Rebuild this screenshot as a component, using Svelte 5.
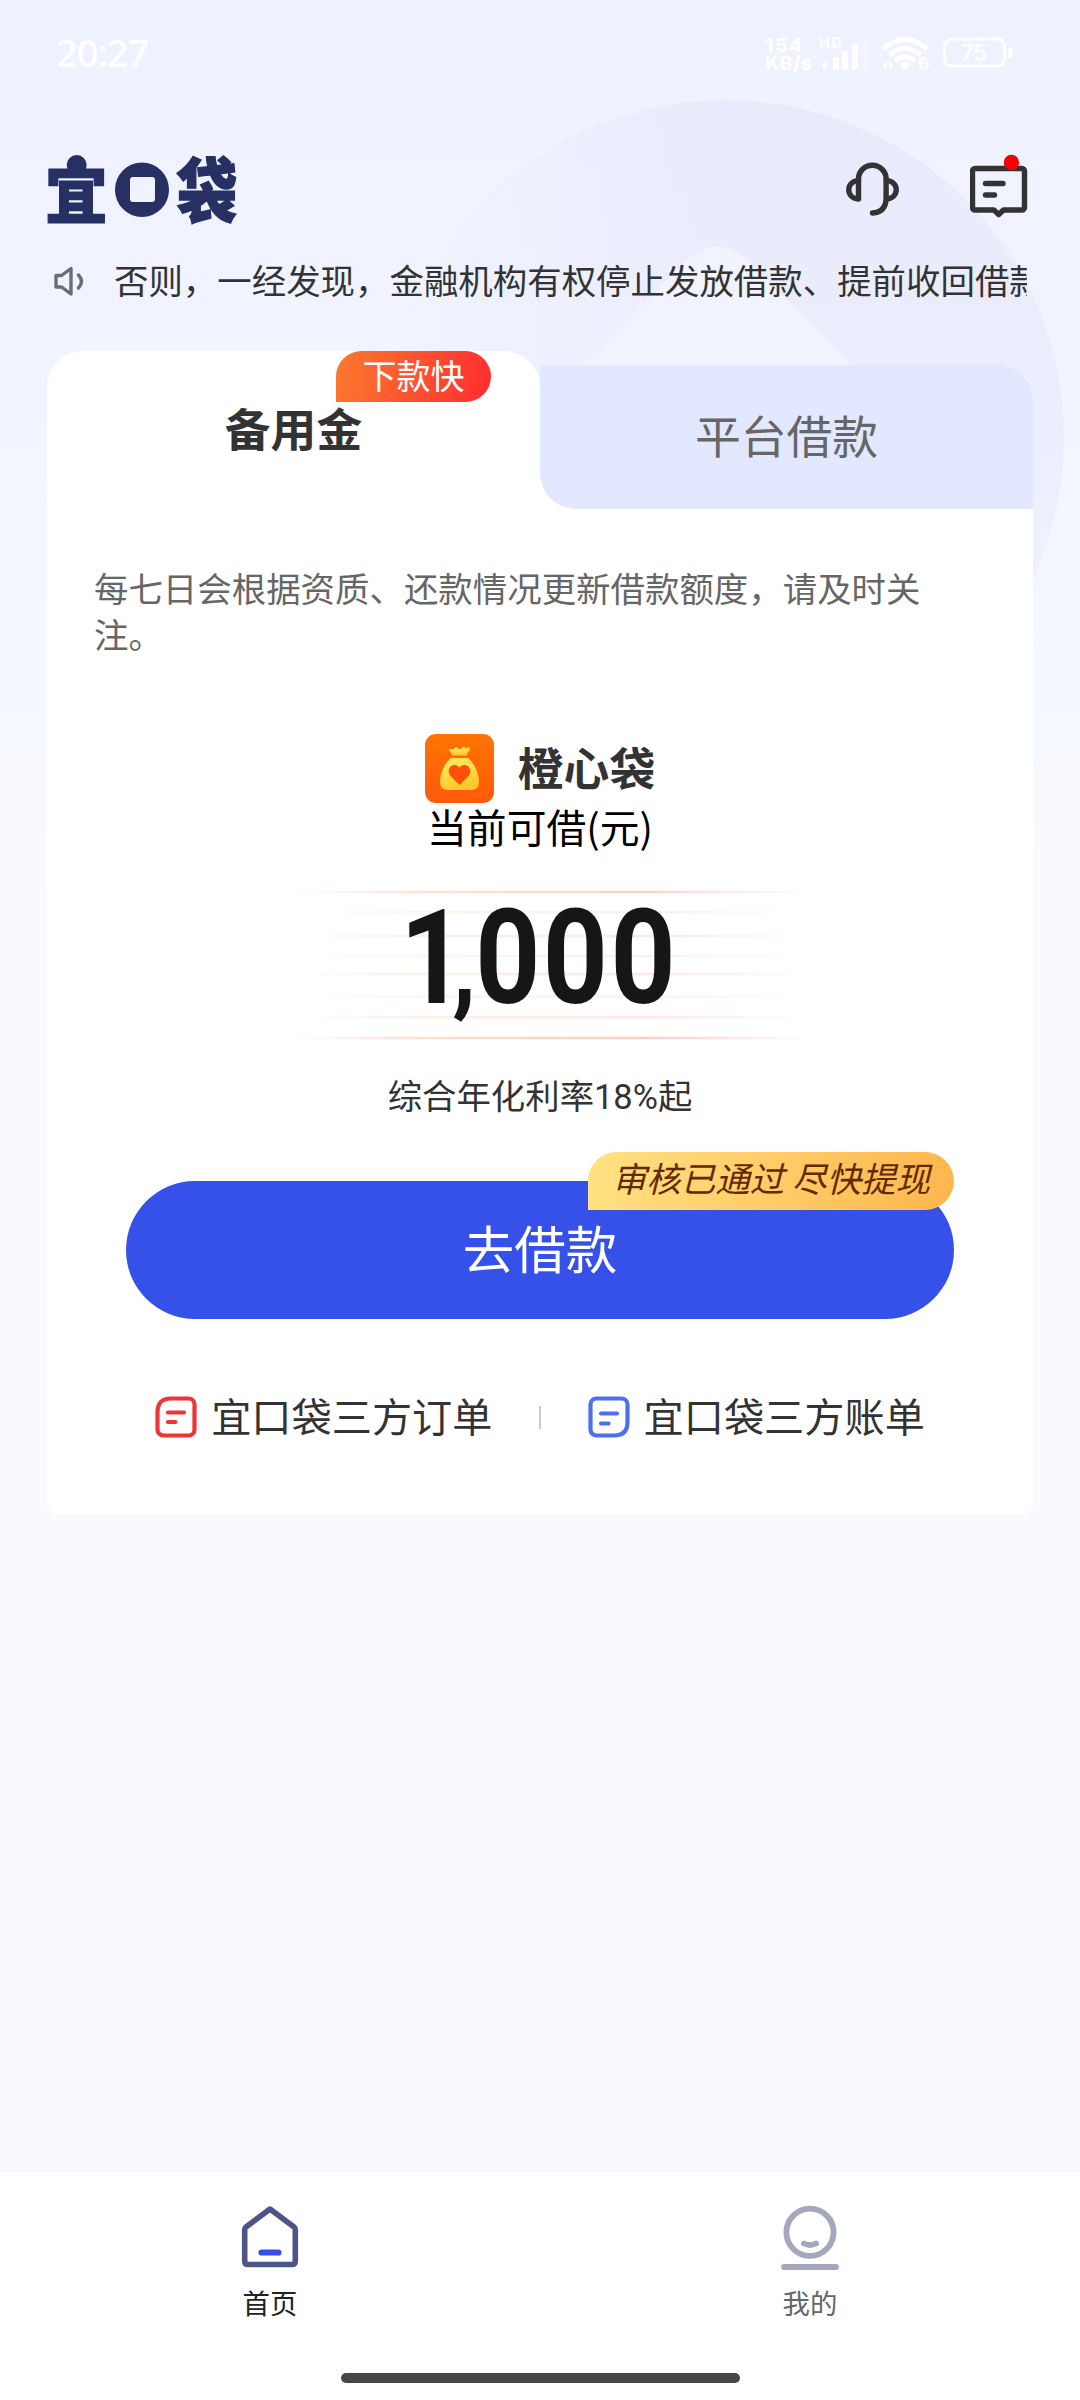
<script>
	let activeTab = 0;

	const tabs = [
		{ label: '备用金', badge: '下款快' },
		{ label: '平台借款' }
	];

	// y offset and strength of the stripes behind the amount
	const stripes = [
		{ y: 8, opacity: 0.28 },
		{ y: 28.3, opacity: 0.1 },
		{ y: 52, opacity: 0.15 },
		{ y: 72.3, opacity: 0.1 },
		{ y: 90, opacity: 0.15 },
		{ y: 112.7, opacity: 0.1 },
		{ y: 133.3, opacity: 0.15 },
		{ y: 154, opacity: 0.32 }
	];
</script>

<div class="page">
	<svg class="backdrop" width="1080" height="900" viewBox="0 0 1080 900" aria-hidden="true">
		<defs>
			<linearGradient id="disc" x1="0" y1="0" x2="0" y2="1">
				<stop offset="0" stop-color="#e9ebfc" />
				<stop offset="0.5" stop-color="#ebeefd" />
				<stop offset="1" stop-color="#f5f7ff" />
			</linearGradient>
			<linearGradient id="discFade" x1="0" y1="0" x2="1" y2="0">
				<stop offset="0" stop-color="#f1f3ff" />
				<stop offset="0.5" stop-color="#f1f3ff" stop-opacity="0" />
			</linearGradient>
		</defs>
		<circle cx="726" cy="438" r="338" fill="url(#disc)" />
		<circle cx="726" cy="438" r="338" fill="url(#discFade)" />
		<rect x="592" y="282" width="250" height="250" rx="40" transform="rotate(45 717 407)" fill="#f1f4ff" />
	</svg>

	<div class="status">
		<span class="clock">20:27</span>
		<svg width="256" height="44" viewBox="762 30 256 44" fill="#fff">
			<g class="net">
				<text x="765" y="51.500" textLength="37">154</text>
				<text x="765" y="70" textLength="47">KB/s</text>
			</g>
			<text class="hd" x="819" y="48" textLength="23">HD</text>
			<path d="M821 66l6-5v9zM833 57h6v13h-6zM842 51h6v19h-6zM852 44h6v26h-6z" />
			<path d="M863 38h5v32h-5z" opacity=".35" />
			<g fill="none" stroke="#fff" stroke-width="5">
				<path d="M883 49q22-19 44 0" />
				<path d="M889 55q16-13 32 0" />
				<path d="M895 61q10-8 20 0" />
			</g>
			<path d="M899 64q6-4 12 0l-6 6zM882 66l5-5v9zM889 61l5 4-5 5z" />
			<text class="gen" x="918" y="70">6</text>
			<rect x="944.500" y="39" width="60" height="27" rx="7" fill="none" stroke="#fff" stroke-width="3" />
			<path d="M1008 47q5 0 5 5.500t-5 5.500z" />
			<text class="level" x="961" y="61" textLength="26">75</text>
		</svg>
	</div>

	<header>
		<svg class="logo" width="190" height="69" viewBox="47 155 190 69" fill="#263063" role="img" aria-label="宜口袋">
			<text transform="translate(45 218) scale(.98 1.02)">宜</text>
			<circle cx="76.700" cy="165" r="10" />
			<path
				fill-rule="evenodd"
				d="M142 162.500a27 27.300 0 1 1 0 54.600a27 27.300 0 1 1 0-54.600zM133 177a3 3 0 0 0-3 3v19a3 3 0 0 0 3 3h19a3 3 0 0 0 3-3v-19a3 3 0 0 0-3-3z"
			/>
			<text transform="translate(176.500 217) scale(.95 1.1)">袋</text>
		</svg>
		<div class="actions">
			<svg width="54" height="54" viewBox="845 162 54 54" fill="none" stroke="#333" stroke-width="5.400" stroke-linecap="round" stroke-linejoin="round">
				<path d="M858.500 198.500v-19.500a13.800 13.800 0 0 1 27.600 0v19q0 14-13.600 15" />
				<path d="M858.500 180.500c-13 1-13 17.500 0 18.500M886.500 180.500c13 1 13 17.500 0 18.500" />
			</svg>
			<svg width="58" height="64" viewBox="970 154 58 64" fill="none" stroke="#333" stroke-width="5.400" stroke-linecap="round" stroke-linejoin="round">
				<path d="M975 168.500h47a2.500 2.500 0 0 1 2.500 2.500v36.500a2.500 2.500 0 0 1-2.500 2.500h-18.500l-4.800 4.500-4.800-4.500h-18.900a2.500 2.500 0 0 1-2.500-2.500v-36.500a2.500 2.500 0 0 1 2.500-2.500z" />
				<path d="M985.500 183.500h17.500M985.500 195h9" />
				<circle cx="1011.400" cy="162.500" r="7.700" fill="#f80000" stroke="none" />
			</svg>
		</div>
	</header>

	<div class="notice">
		<svg width="32" height="32" viewBox="53 265 32 32" fill="none" stroke="#6b6c76" stroke-width="3.400" stroke-linecap="round" stroke-linejoin="round">
			<path d="M56 275.500h5.500l9.500-7v25.500l-9.500-7h-5.500z" />
			<path d="M78.500 275q6 6.500 0 13" />
		</svg>
		<p>否则，一经发现，金融机构有权停止发放借款、提前收回借款。</p>
	</div>

	<main>
		<div class="tabs">
			{#each tabs as tab, i}
				<div class="slot">
					<button class="tab" class:active={activeTab === i} on:click={() => (activeTab = i)}>
						{tab.label}
						{#if tab.badge}
							<span class="badge">{tab.badge}</span>
						{/if}
					</button>
				</div>
			{/each}
		</div>

		<section class="body">
			<p class="hint">每七日会根据资质、还款情况更新借款额度，请及时关注。</p>

			<div class="product">
				<svg width="69" height="69" viewBox="0 0 69 69">
					<defs>
						<linearGradient id="tile" x1="0" y1="0" x2="0" y2="1">
							<stop offset="0" stop-color="#ff7403" />
							<stop offset="1" stop-color="#ff5a0c" />
						</linearGradient>
						<linearGradient id="bag" x1="0" y1="0" x2="0.300" y2="1">
							<stop offset="0" stop-color="#ffe566" />
							<stop offset="0.500" stop-color="#ffe044" />
							<stop offset="1" stop-color="#ffc72d" />
						</linearGradient>
					</defs>
					<rect width="69" height="69" rx="11" fill="url(#tile)" />
					<path d="M24 15.500q2-1.500 4 .500q2-4 5-2q1.500 2.500 3.500 0q3-2.500 4.500.500q2.500-2 4-.500q.500 2-2 4.500l-1.500 3h-14l-1.500-3q-2-1.500-2-3z" fill="url(#bag)" />
					<path d="M26 24h17c6 5 11 15 11 24q0 8-8 8h-23q-8 0-8-8c0-9 5-19 11-24z" fill="url(#bag)" />
					<path d="M34.500 51l-9-9c-6-8 4-15 9-8.500c5-6.500 15 .500 9 8.500z" fill="#ff4f08" />
				</svg>
				<h2>橙心袋</h2>
			</div>

			<p class="caption">当前可借(元)</p>

			<svg class="amount" width="892" height="160" viewBox="94 0 892 160">
				<defs>
					<linearGradient id="stripe" x1="0" x2="1" y1="0" y2="0">
						<stop offset="0" stop-color="#f0653f" stop-opacity="0" />
						<stop offset="0.100" stop-color="#f0653f" stop-opacity="0.100" />
						<stop offset="0.300" stop-color="#f59a5c" />
						<stop offset="0.700" stop-color="#f0654f" />
						<stop offset="1" stop-color="#f0653f" stop-opacity="0" />
					</linearGradient>
				</defs>
				{#each stripes as { y, opacity }}
					<rect x="270" y={y - 1.25} width="540" height="2.500" fill="url(#stripe)" {opacity} />
				{/each}
				<text transform="scale(.86 1)" x="465 526 552.500 631 710" y="118.500">1<tspan class="comma">,</tspan>000</text>
			</svg>

			<p class="rate">综合年化利率<span>18%</span>起</p>

			<button class="borrow">
				去借款
				<span class="ribbon">审核已通过 尽快提现</span>
			</button>

			<div class="links">
				<span class="link">
					<svg width="42" height="42" viewBox="0 0 42 42" fill="none" stroke="#ef3434" stroke-width="4.200" stroke-linecap="round">
						<path d="M16 2.500h17.500a6 6 0 0 1 6 6v25a6 6 0 0 1-6 6h-25a6 6 0 0 1-6-6v-17.500q0-13.500 13.500-13.500z" />
						<path d="M13 16.500h16M13 26h7.500" />
					</svg>
					<b>宜口袋三方订单</b>
				</span>
				<i></i>
				<span class="link">
					<svg width="42" height="42" viewBox="0 0 42 42" fill="none" stroke="#4d70ef" stroke-width="4.200" stroke-linecap="round">
						<path d="M8.500 2.500h25a6 6 0 0 1 6 6v17.500q0 13.500-13.500 13.500h-17.500a6 6 0 0 1-6-6v-25a6 6 0 0 1 6-6z" />
						<path d="M13 17.500h16M13 27.500h7.500" />
					</svg>
					<b>宜口袋三方账单</b>
				</span>
			</div>
		</section>
	</main>

	<footer>
		<nav>
			<span class="item current">
				<svg width="60" height="68" viewBox="240 2204 60 68" fill="none" stroke="#4c5686" stroke-width="5.600" stroke-linejoin="round" stroke-linecap="round">
					<path d="M270 2209l24 18q1.300 1 1.300 3v31q0 3.500-3.500 3.500h-43.600q-3.500 0-3.500-3.500v-31q0-2 1.300-3z" />
					<path d="M261.500 2252.500h17" stroke="#3551e9" stroke-width="6.200" />
				</svg>
				首页
			</span>
			<span class="item">
				<svg width="60" height="68" viewBox="780 2204 60 68" fill="none" stroke="#a5a7bc" stroke-width="5.800" stroke-linecap="round">
					<circle cx="810" cy="2232.300" r="23.600" />
					<path d="M804 2243.500q6 3 12 0M784 2267h52" />
				</svg>
				我的
			</span>
		</nav>
		<div class="handle"></div>
	</footer>
</div>

<style>
	:global(body) {
		background: #f9faff;
	}

	.page {
		position: relative;
		display: flex;
		flex-direction: column;
		width: 1080px;
		height: 2400px;
		overflow: hidden;
		background: linear-gradient(#eff1ff 0, #f1f4ff 300px, #f4f7ff 560px, #f9faff 900px);
		font-family: "Noto Sans CJK SC", sans-serif;
		color: #333;
	}

	.backdrop {
		position: absolute;
		top: 0;
		left: 0;
	}

	.status, header, .notice, main, footer {
		position: relative;
	}

	p, h2 {
		margin: 0;
	}

	button {
		border: 0;
		font-family: inherit;
		display: block;
	}

	.status {
		display: flex;
		justify-content: space-between;
		align-items: center;
		height: 104px;
		padding: 0 62px 0 56px;
		box-sizing: border-box;
		color: #fff;
	}

	.clock {
		font: 500 38px/44px "Noto Sans", sans-serif;
		letter-spacing: -1px;
	}

	.net {
		font: 800 19px Inter, sans-serif;
	}

	.hd {
		font: bold 14.5px Inter, sans-serif;
	}

	.gen {
		font: bold 17px Inter, sans-serif;
	}

	.level {
		font: 500 23px Inter, sans-serif;
	}

	header {
		display: flex;
		justify-content: space-between;
		height: 69px;
		margin: 51px 52px 0 47px;
	}

	.logo, .amount {
		overflow: visible;
	}

	.logo text {
		font: 900 64px "Noto Sans CJK SC", sans-serif;
		stroke: #263063;
		stroke-width: 1.2;
	}

	.actions {
		display: flex;
		align-items: flex-start;
		gap: 71px;
	}

	.actions svg:first-child {
		margin-top: 7px;
	}

	.actions svg:last-child {
		margin-top: -1px;
	}

	.notice {
		display: flex;
		align-items: center;
		gap: 29px;
		height: 46px;
		margin: 32px 53px 0 53px;
	}

	.notice svg {
		flex: none;
		margin-top: 3px;
	}

	.notice p {
		overflow: hidden;
		white-space: nowrap;
		font-size: 34.45px;
		line-height: 46px;
	}

	main {
		margin: 49px 47px 0;
	}

	.tabs {
		display: flex;
		height: 158px;
	}

	.slot {
		flex: 1;
	}

	.slot:last-child {
		background: linear-gradient(#fff, #fff) 0 100% / 50px 50px no-repeat;
	}

	.tab {
		position: relative;
		width: 100%;
		height: 144px;
		margin-top: 14px;
		padding: 39px 0 45px;
		border-radius: 0 36px 0 36px;
		background: #e2e8ff;
		font-size: 45.8px;
		line-height: 60px;
		color: #666;
	}

	.tab.active {
		height: 158px;
		margin-top: 0;
		padding: 46px 0 52px;
		border-radius: 36px 36px 0 0;
		background: #fff;
		font-weight: bold;
		color: #333;
	}

	.badge {
		position: absolute;
		top: 0;
		left: 289px;
		width: 155px;
		height: 51px;
		border-radius: 25.5px 25.5px 25.5px 0;
		background: linear-gradient(100deg, #fb792e, #ff2d30);
		font-size: 34px;
		font-weight: normal;
		line-height: 47px;
		color: #fff;
	}

	.body {
		display: flex;
		flex-direction: column;
		height: 1005px;
		padding: 55px 47px 0;
		box-sizing: border-box;
		border-radius: 0 0 12px 12px;
		background: #fff;
	}

	.hint {
		font-size: 34.45px;
		line-height: 46px;
		color: #666;
	}

	.product {
		display: flex;
		justify-content: center;
		gap: 24px;
		margin-top: 78px;
	}

	h2 {
		font-size: 45.8px;
		line-height: 64px;
	}

	.caption {
		font-size: 39.8px;
		line-height: 46px;
		text-align: center;
		color: #000;
	}

	.amount {
		margin-top: 35px;
	}

	.amount text {
		font: bold 132px Roboto, sans-serif;
		fill: #161616;
	}

	.comma {
		font-size: 112px;
	}

	.rate {
		height: 46px;
		margin-top: 27px;
		font-size: 34.4px;
		line-height: 46px;
		text-align: center;
	}

	.rate span {
		font-family: Roboto, sans-serif;
		line-height: 1;
	}

	.borrow {
		position: relative;
		width: 828px;
		height: 138px;
		margin: 64px auto 0;
		padding: 0 0 6px;
		border-radius: 69px;
		background: #3551e9;
		font-size: 51.5px;
		line-height: 132px;
		color: #fff;
	}

	.ribbon {
		position: absolute;
		top: -29px;
		right: 0;
		width: 366px;
		height: 58px;
		border-radius: 29px 29px 29px 0;
		background: linear-gradient(100deg, #ffe282, #ffb64d);
		font-size: 34.5px;
		font-style: italic;
		line-height: 51px;
		white-space: nowrap;
		color: #622a00;
	}

	.links {
		display: flex;
		align-items: center;
		justify-content: center;
		height: 46px;
		margin-top: 75px;
	}

	.link {
		display: flex;
		align-items: center;
		gap: 14px;
		height: 42px;
	}

	.link b {
		padding-bottom: 5px;
		font-size: 40.2px;
		font-weight: normal;
		line-height: 42px;
	}

	.links i {
		width: 2px;
		height: 23px;
		margin: 0 47px 0 46px;
		background: #ccc;
	}

	footer {
		height: 228px;
		margin-top: auto;
		background: #fff;
	}

	nav {
		display: flex;
		height: 201px;
	}

	.item {
		display: flex;
		flex: 1;
		flex-direction: column;
		align-items: center;
		padding-top: 32px;
		font-size: 27.4px;
		line-height: 61px;
		color: #666;
	}

	.current {
		color: #222;
	}

	.handle {
		width: 399px;
		height: 10px;
		margin: 0 auto;
		border-radius: 5px;
		background: #464646;
	}
</style>
